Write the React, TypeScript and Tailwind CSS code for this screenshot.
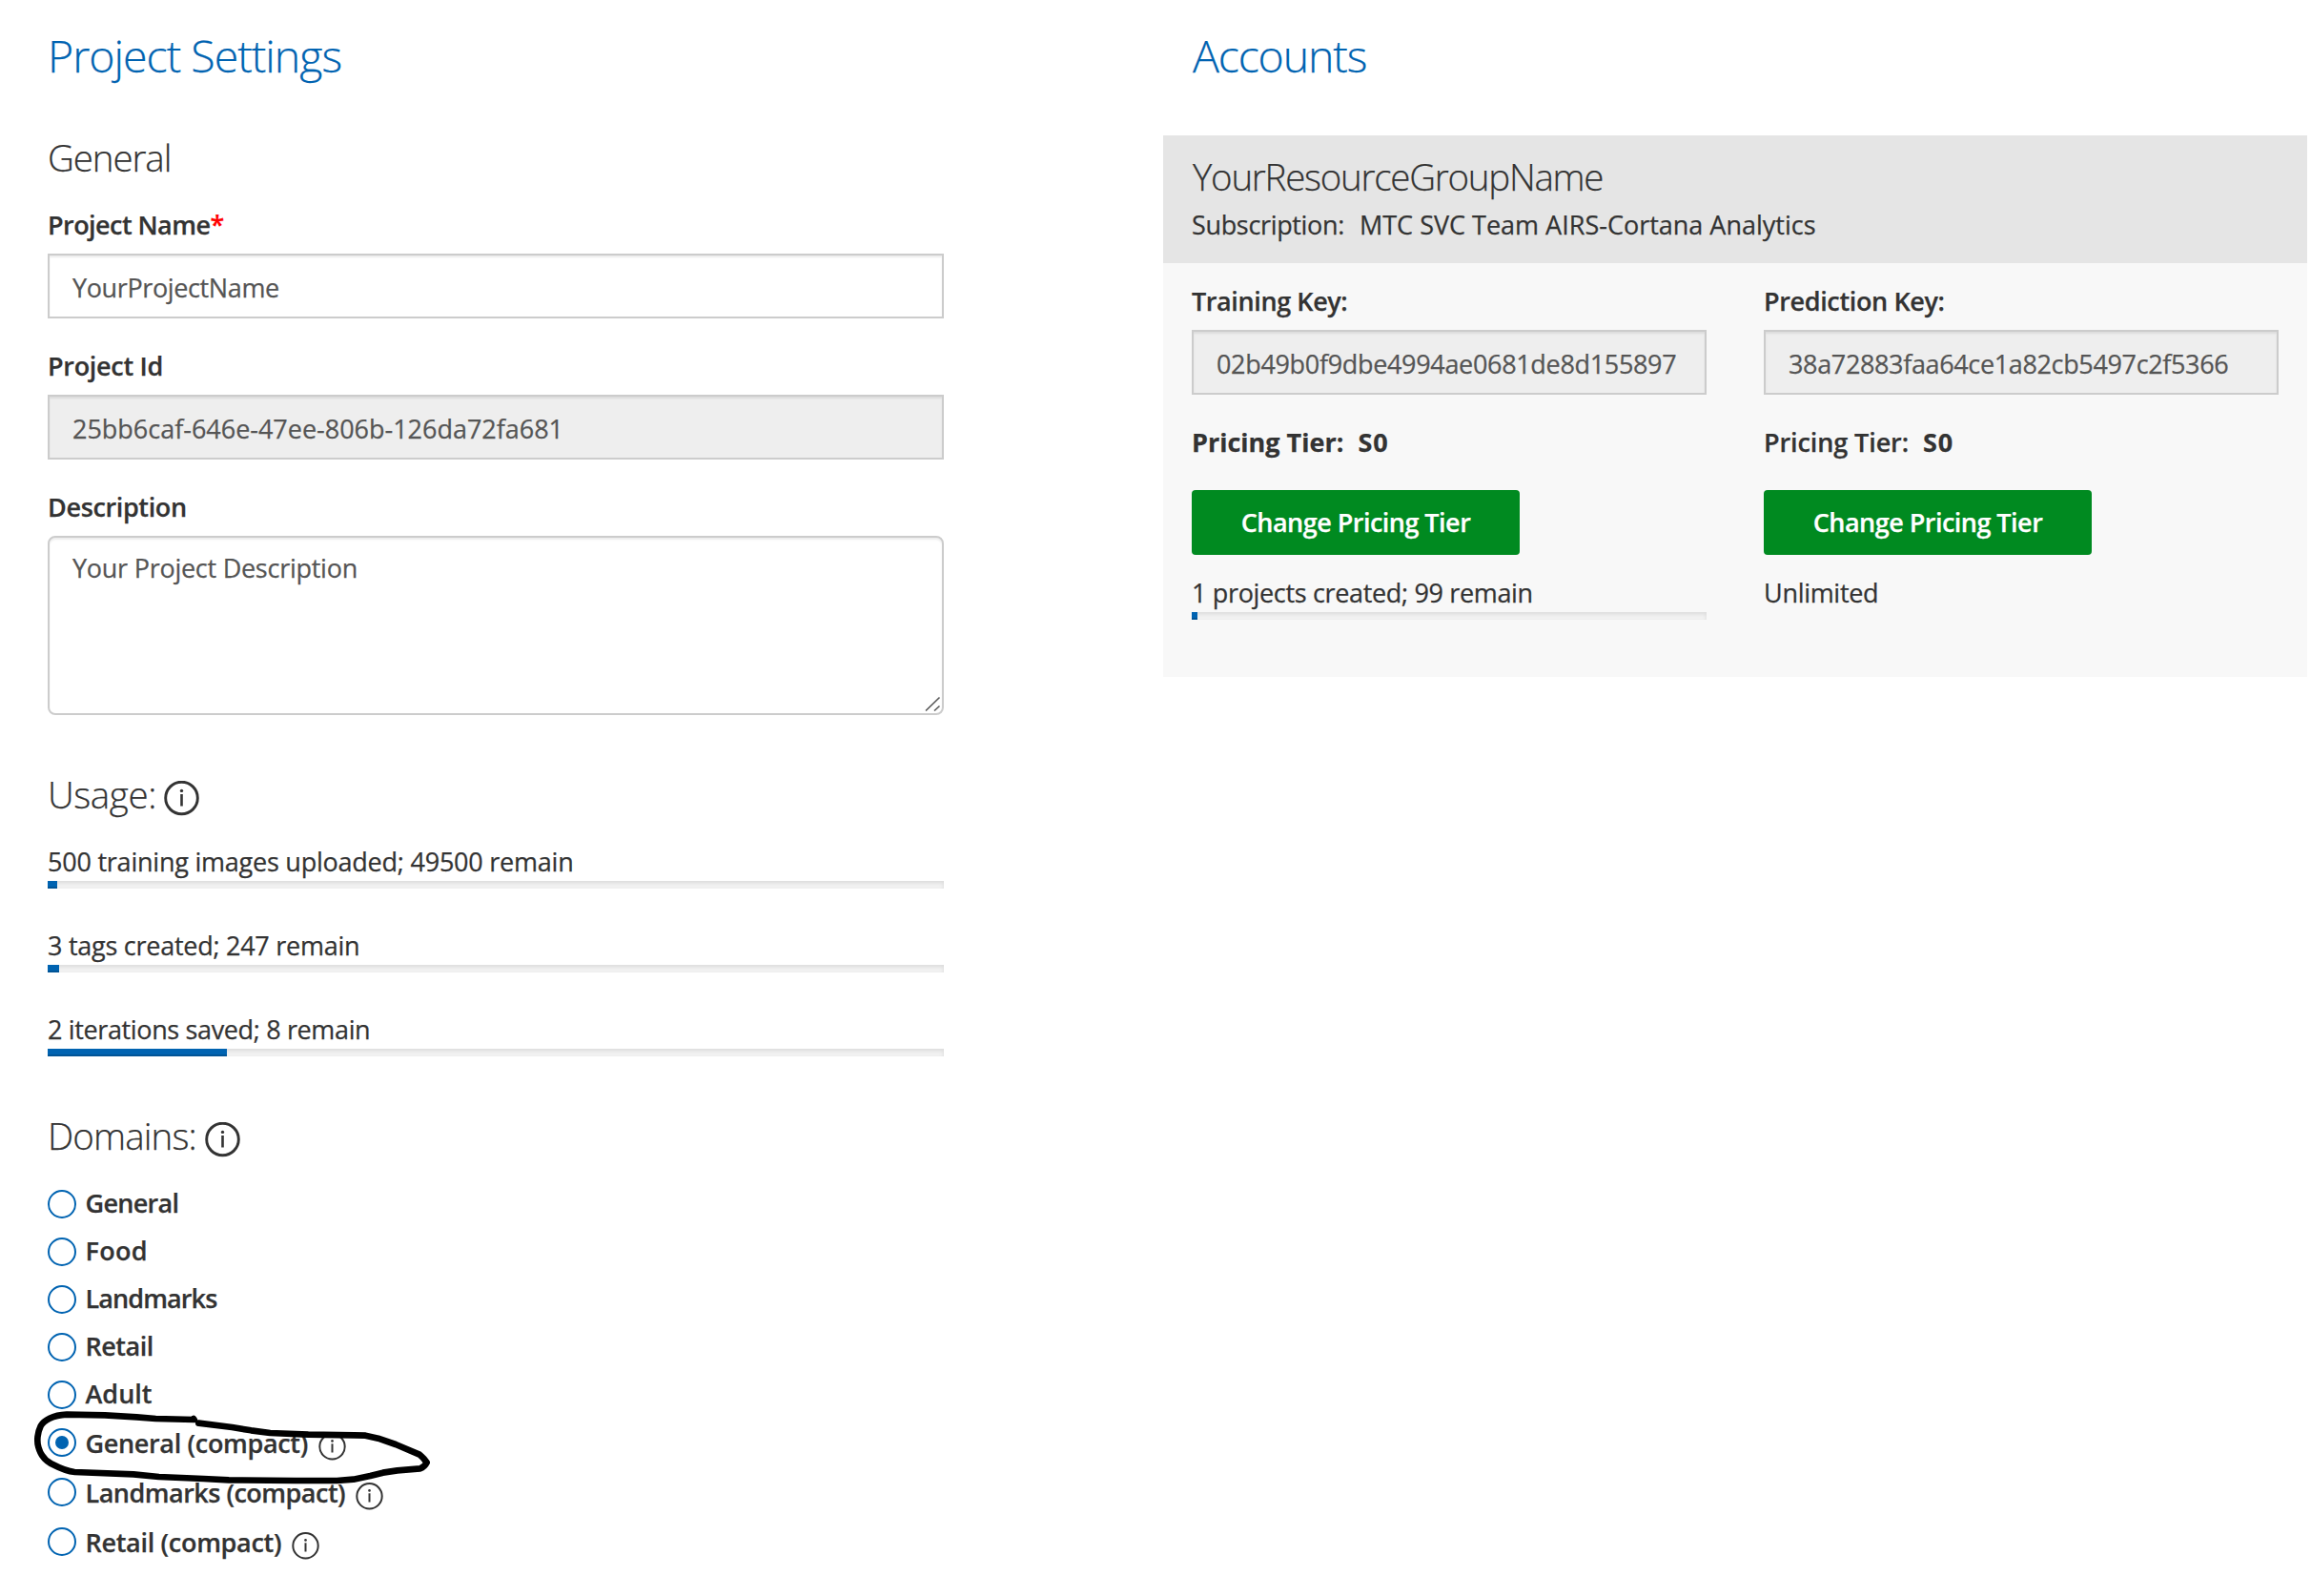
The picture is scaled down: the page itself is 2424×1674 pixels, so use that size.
import React from "react";

const body = "text-[27px] leading-[39px] whitespace-pre";

function Heading({ children, className }: { children: React.ReactNode; className: string }) {
  return <h1 className={`mt-[26px] text-[46.5px] leading-[64px] font-light text-[#0063b1] ${className}`}>{children}</h1>;
}

function SectionTitle({ children, className }: { children: React.ReactNode; className: string }) {
  return <h2 className={`text-[38.5px] leading-[52px] font-light whitespace-pre ${className}`}>{children}</h2>;
}

function InfoLarge({ className }: { className: string }) {
  return (
    <svg viewBox="0 0 37 37" className={`size-[37px] shrink-0 ${className}`} fill="none" stroke="#333">
      <circle cx="18.5" cy="18" r="16.8" strokeWidth="2.9" />
      <path d="M18.5 14V26.5" strokeWidth="2.6" />
      <circle cx="18.5" cy="10.4" r="1.7" fill="#333" stroke="none" />
    </svg>
  );
}

function InfoSmall() {
  return (
    <svg viewBox="0 0 29 29" className="mt-[11px] ml-[11px] size-[29px] shrink-0" fill="none" stroke="#333">
      <circle cx="14.5" cy="14.3" r="13.2" strokeWidth="2" />
      <path d="M14.5 11.3V20.5" strokeWidth="2" />
      <circle cx="14.5" cy="8.4" r="1.3" fill="#333" stroke="none" />
    </svg>
  );
}

function Label({ children, className = "" }: { children: React.ReactNode; className?: string }) {
  return <div className={`${body} font-semibold ${className}`}>{children}</div>;
}

function Field({ value, disabled, className }: { value: string; disabled?: boolean; className: string }) {
  return (
    <div
      className={`mt-[11px] h-[68px] border-2 border-[#ccc] pt-[14px] pl-[24px] text-[#555] shadow-[inset_0_2px_2px_rgba(0,0,0,0.075)] ${body} ${disabled ? "bg-[#eee]" : "bg-white"} ${className}`}
    >
      {value}
    </div>
  );
}

function Meter({ text, percent, className }: { text: string; percent: number; className: string }) {
  return (
    <div>
      <div className={`${body} ${className}`}>{text}</div>
      <div className="mt-px h-2 bg-[#f2f2f2] shadow-[inset_0_2px_4px_rgba(0,0,0,0.1)]">
        <div className="h-2 bg-[#0063b1] shadow-[inset_0_-2px_0_rgba(0,0,0,0.15)]" style={{ width: `${percent}%` }} />
      </div>
    </div>
  );
}

const domains = [
  { name: "General", className: "tracking-[-0.7px]" },
  { name: "Food", className: "tracking-[0.3px]" },
  { name: "Landmarks", className: "tracking-[-0.9px]" },
  { name: "Retail", className: "tracking-[-0.5px]" },
  { name: "Adult", className: "tracking-[0px]" },
  { name: "General (compact)", className: "tracking-[-0.33px]", info: true, selected: true },
  { name: "Landmarks (compact)", className: "tracking-[-0.51px]", info: true },
  { name: "Retail (compact)", className: "tracking-[-0.3px]", info: true },
];

function Scribble() {
  return (
    <svg
      viewBox="90 135 1290 255"
      className="absolute top-[-17px] left-[-20px] h-[85px] w-[430px]"
      fill="none"
      stroke="#000"
      strokeWidth="20"
      strokeLinecap="round"
      strokeLinejoin="round"
    >
      <path d="M609 174L611 177L490 174L430 169L330 163L210 161C165 163 138 180 128 197C118 217 115 245 121 264C128 290 142 305 160 315C185 328 210 340 235 342L420 349L500 357L640 363L720 367L930 369L1060 369L1112 365L1165 354L1205 344L1250 337L1322 331C1333 327 1339 320 1343 312C1336 302 1328 293 1320 287L1245 255L1190 236L1150 227L1115 226L970 224L850 219L790 211L730 201L625 188" />
    </svg>
  );
}

function DomainRow({ name, className, info, selected }: { name: string; className: string; info?: boolean; selected?: boolean }) {
  return (
    <div className={`relative flex items-start ${info ? "h-[52px]" : "h-[50px]"}`}>
      <span className="mt-[6px] flex size-[30px] shrink-0 items-center justify-center rounded-full border-2 border-[#0063b1]">
        {selected && <span className="size-[14px] rounded-full bg-[#0063b1]" />}
      </span>
      <span className={`ml-[9.5px] font-semibold ${body} ${info ? "mt-[2px]" : ""} ${className}`}>{name}</span>
      {info && <InfoSmall />}
      {selected && <Scribble />}
    </div>
  );
}

function TierButton() {
  return (
    <button className={`mt-[31px] flex h-[68px] w-[344px] justify-center rounded-[4px] bg-[#008a20] pt-[14px] font-semibold tracking-[-0.52px] text-white ${body}`}>
      Change Pricing Tier
    </button>
  );
}

export default function App() {
  return (
    <div className="flex h-[1674px] w-[2424px] overflow-hidden bg-white font-['Open_Sans',sans-serif] text-[#333] [-webkit-text-stroke:0.25px]">
      <main className="flex w-[1220px] shrink-0 flex-col pl-[50px]">
        <div className="w-[940px]">
          <Heading className="tracking-[-1px]">Project Settings</Heading>

          <SectionTitle className="mt-[49px] tracking-[-1.1px]">General</SectionTitle>
          <Label className="mt-[25px] tracking-[-0.55px]">
            Project Name<span className="text-[#f00]">*</span>
          </Label>
          <Field value="YourProjectName" className="tracking-[-0.38px]" />
          <Label className="mt-[30px] tracking-[-0.29px]">Project Id</Label>
          <Field value="25bb6caf-646e-47ee-806b-126da72fa681" disabled className="tracking-[-0.02px]" />
          <Label className="mt-[30px] tracking-[-0.36px]">Description</Label>
          <div className={`relative mt-[11px] h-[188px] rounded-[8px] border-2 border-[#ccc] pt-[12px] pl-[24px] tracking-[-0.26px] text-[#555] shadow-[inset_0_2px_2px_rgba(0,0,0,0.075)] ${body}`}>
            Your Project Description
            <svg viewBox="0 0 17 17" className="absolute right-[1px] bottom-[1px] size-[17px]" stroke="#555" strokeWidth="1.6">
              <path d="M1 15.5L15.5 1.5M10 15.5L15.5 10.5" />
            </svg>
          </div>

          <div className="mt-[57px] flex">
            <SectionTitle className="tracking-[-0.4px]">Usage:</SectionTitle>
            <InfoLarge className="mt-[12px] ml-[8px]" />
          </div>
          <div className="mt-[25px] flex flex-col gap-10">
            <Meter text="500 training images uploaded; 49500 remain" percent={1.06} className="tracking-[-0.23px]" />
            <Meter text="3 tags created; 247 remain" percent={1.28} className="tracking-[-0.26px]" />
            <Meter text="2 iterations saved; 8 remain" percent={20} className="tracking-[-0.36px]" />
          </div>

          <div className="mt-[57px] flex">
            <SectionTitle className="tracking-[-0.85px]">Domains:</SectionTitle>
            <InfoLarge className="mt-[12px] ml-[9px]" />
          </div>
          <div className="mt-[25px] flex flex-col">
            {domains.map((d) => (
              <DomainRow key={d.name} {...d} />
            ))}
          </div>
        </div>
      </main>

      <aside className="w-[1200px] shrink-0">
        <Heading className="pl-[31px] tracking-[-1.17px]">Accounts</Heading>
        <section className="mt-[52px]">
          <header className="h-[134px] bg-[#e5e5e5] pt-[17px] pl-[30px]">
            <SectionTitle className="pl-px tracking-[-1.26px]">YourResourceGroupName</SectionTitle>
            <div className={`mt-[5px] flex gap-[16px] ${body}`}>
              <span className="tracking-[-0.34px]">Subscription:</span>
              <span>MTC SVC Team AIRS-Cortana Analytics</span>
            </div>
          </header>
          <div className="grid h-[434px] grid-cols-[540px_540px] gap-x-[60px] bg-[#f8f8f8] px-[30px] pt-[20px]">
            <div>
              <Label className="tracking-[-0.4px]">Training Key:</Label>
              <Field value="02b49b0f9dbe4994ae0681de8d155897" disabled className="tracking-[-0.33px]" />
              <div className={`mt-[30px] flex gap-[15px] font-bold ${body}`}>
                <span>Pricing Tier:</span>
                <span className="tracking-[1px]">S0</span>
              </div>
              <TierButton />
              <div className="mt-5">
                <Meter text="1 projects created; 99 remain" percent={1.11} className="tracking-[-0.34px]" />
              </div>
            </div>
            <div>
              <Label className="tracking-[-0.36px]">Prediction Key:</Label>
              <Field value="38a72883faa64ce1a82cb5497c2f5366" disabled className="tracking-[-0.36px]" />
              <div className={`mt-[30px] flex gap-[15px] ${body}`}>
                <span className="font-semibold tracking-[-0.1px]">Pricing Tier:</span>
                <span className="font-bold tracking-[1px]">S0</span>
              </div>
              <TierButton />
              <div className={`mt-5 tracking-[-0.3px] ${body}`}>Unlimited</div>
            </div>
          </div>
        </section>
      </aside>
    </div>
  );
}
